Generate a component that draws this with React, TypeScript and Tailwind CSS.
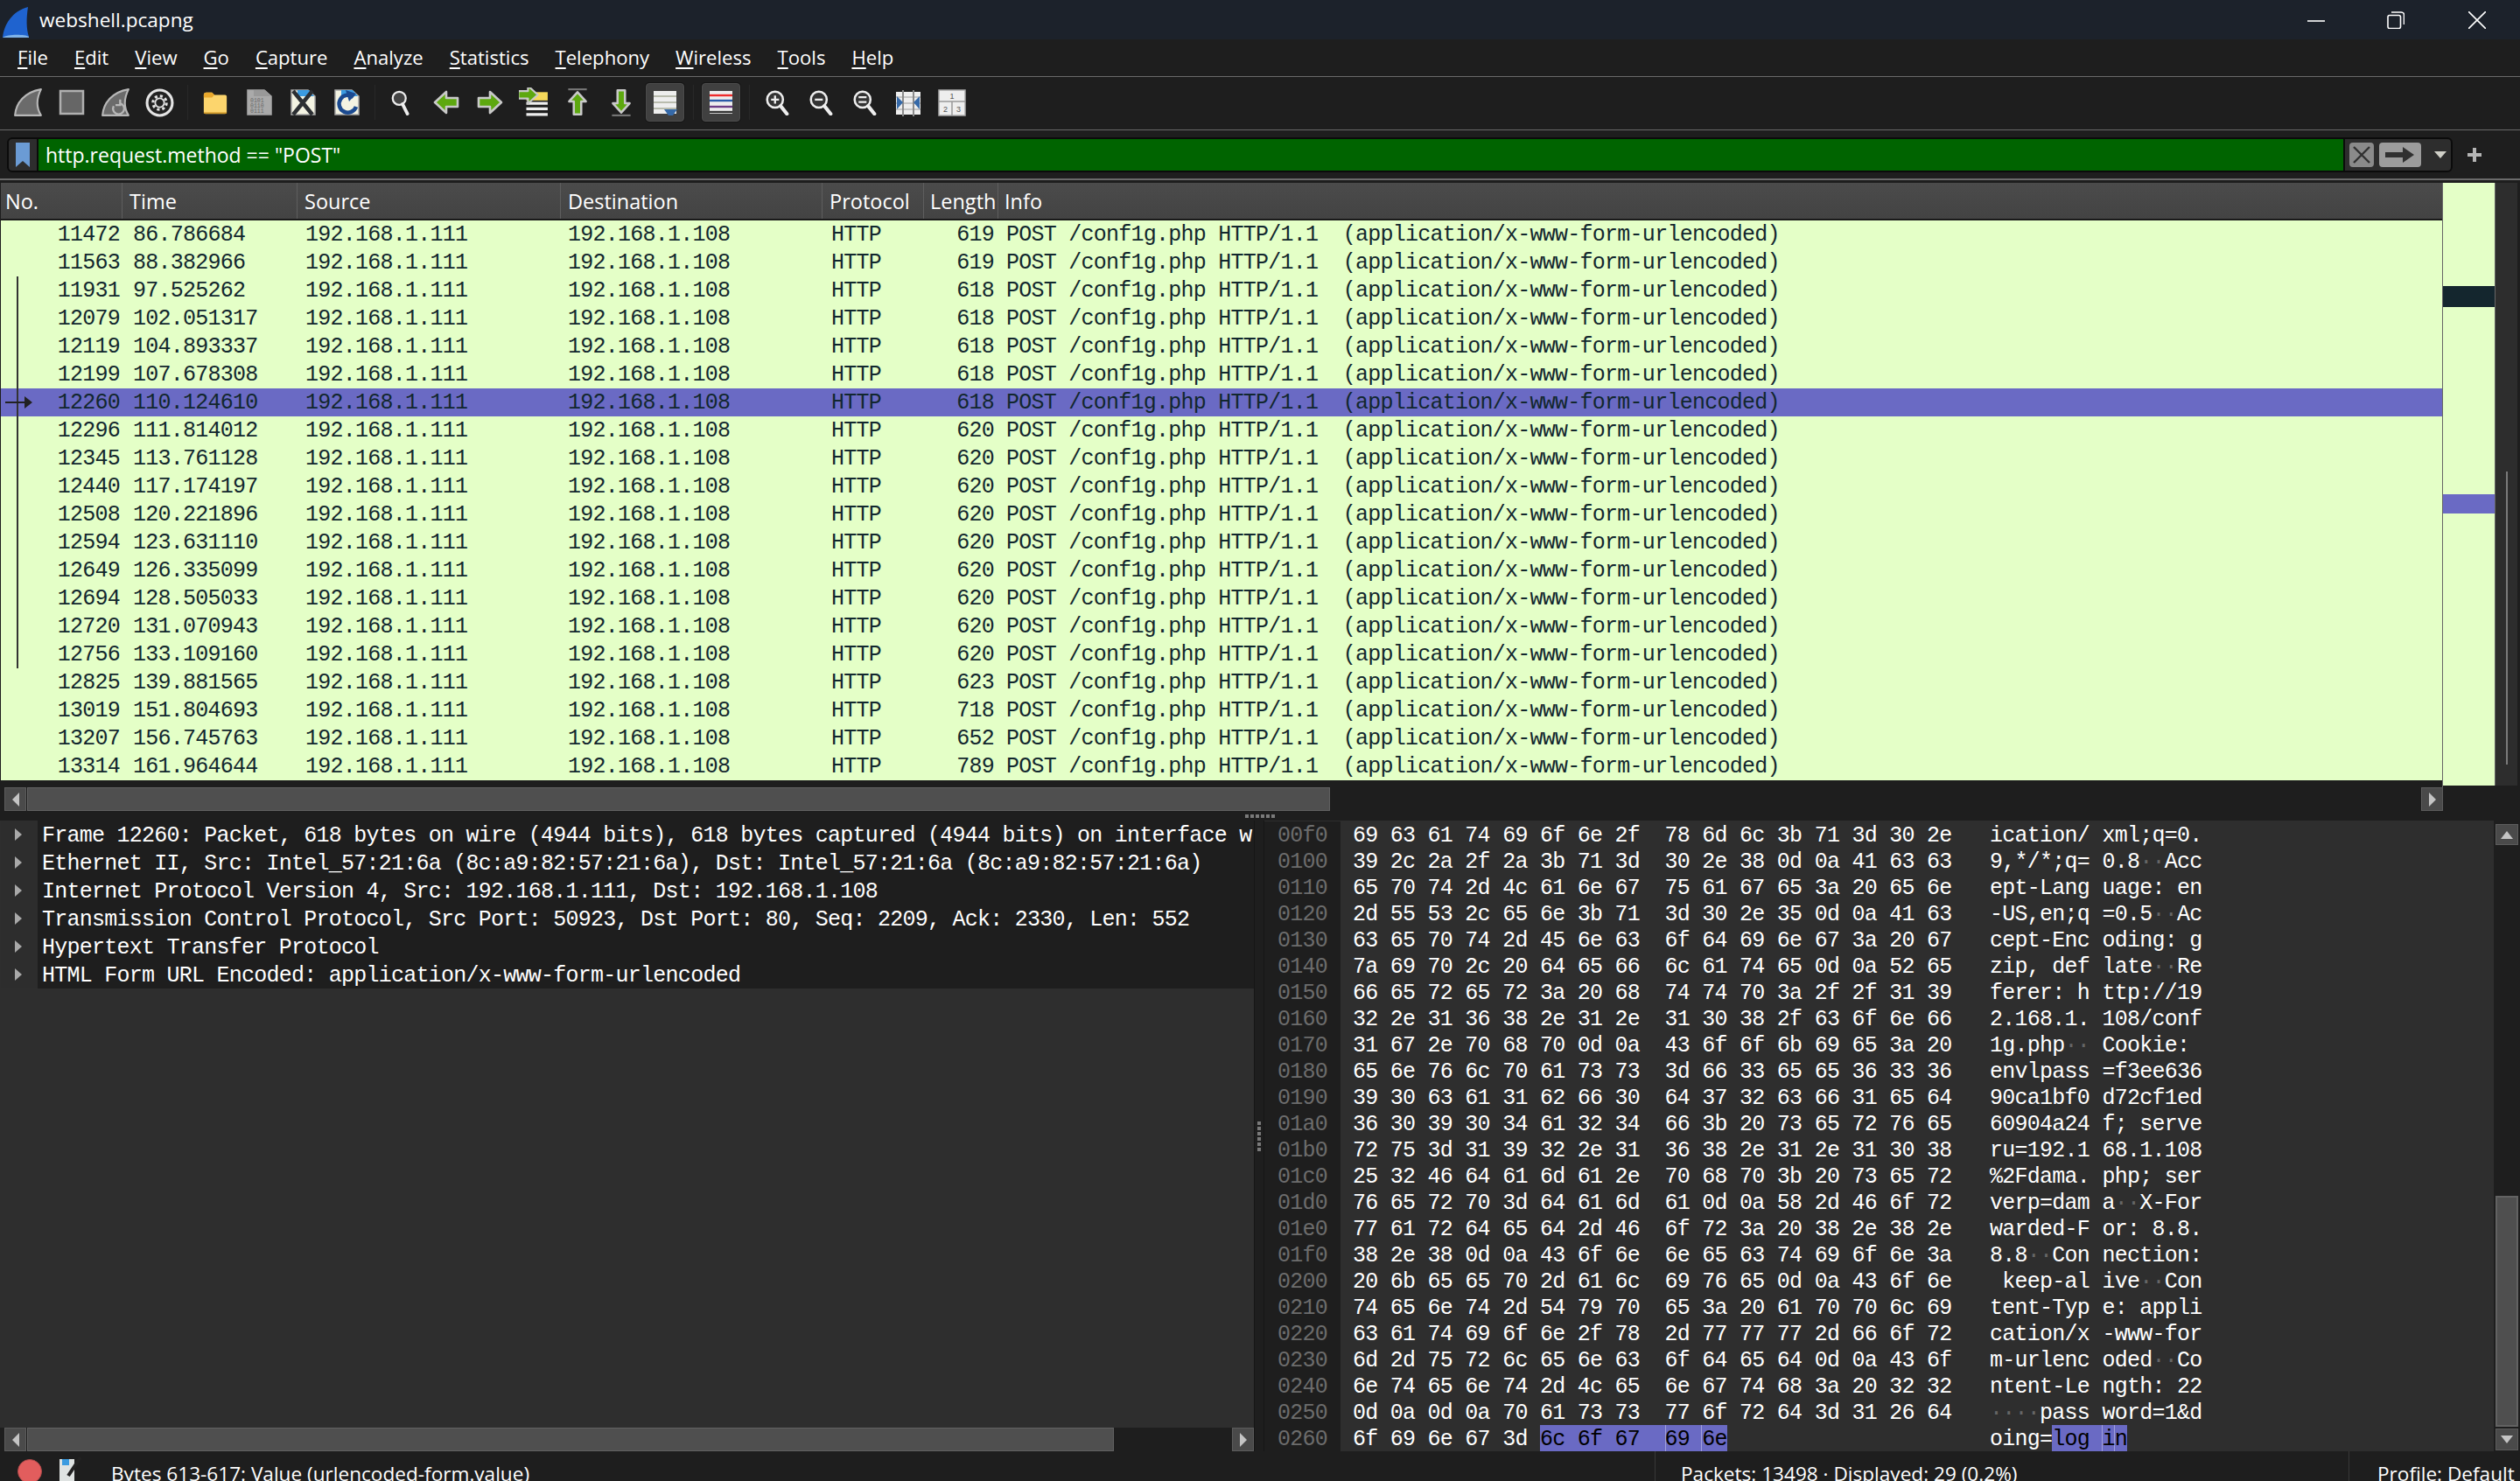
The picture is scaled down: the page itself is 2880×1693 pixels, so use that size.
import type { ReactNode } from "react";

const mono = "font-['Liberation_Mono',monospace] text-[25px] tracking-[-0.75px] whitespace-pre";

const PACKETS = [
  ["11472", "86.786684", "619"],
  ["11563", "88.382966", "619"],
  ["11931", "97.525262", "618"],
  ["12079", "102.051317", "618"],
  ["12119", "104.893337", "618"],
  ["12199", "107.678308", "618"],
  ["12260", "110.124610", "618"],
  ["12296", "111.814012", "620"],
  ["12345", "113.761128", "620"],
  ["12440", "117.174197", "620"],
  ["12508", "120.221896", "620"],
  ["12594", "123.631110", "620"],
  ["12649", "126.335099", "620"],
  ["12694", "128.505033", "620"],
  ["12720", "131.070943", "620"],
  ["12756", "133.109160", "620"],
  ["12825", "139.881565", "623"],
  ["13019", "151.804693", "718"],
  ["13207", "156.745763", "652"],
  ["13314", "161.964644", "789"],
];

const TREE = [
  "Frame 12260: Packet, 618 bytes on wire (4944 bits), 618 bytes captured (4944 bits) on interface w",
  "Ethernet II, Src: Intel_57:21:6a (8c:a9:82:57:21:6a), Dst: Intel_57:21:6a (8c:a9:82:57:21:6a)",
  "Internet Protocol Version 4, Src: 192.168.1.111, Dst: 192.168.1.108",
  "Transmission Control Protocol, Src Port: 50923, Dst Port: 80, Seq: 2209, Ack: 2330, Len: 552",
  "Hypertext Transfer Protocol",
  "HTML Form URL Encoded: application/x-www-form-urlencoded",
];

const HEX = [
  "69 63 61 74 69 6f 6e 2f 78 6d 6c 3b 71 3d 30 2e",
  "39 2c 2a 2f 2a 3b 71 3d 30 2e 38 0d 0a 41 63 63",
  "65 70 74 2d 4c 61 6e 67 75 61 67 65 3a 20 65 6e",
  "2d 55 53 2c 65 6e 3b 71 3d 30 2e 35 0d 0a 41 63",
  "63 65 70 74 2d 45 6e 63 6f 64 69 6e 67 3a 20 67",
  "7a 69 70 2c 20 64 65 66 6c 61 74 65 0d 0a 52 65",
  "66 65 72 65 72 3a 20 68 74 74 70 3a 2f 2f 31 39",
  "32 2e 31 36 38 2e 31 2e 31 30 38 2f 63 6f 6e 66",
  "31 67 2e 70 68 70 0d 0a 43 6f 6f 6b 69 65 3a 20",
  "65 6e 76 6c 70 61 73 73 3d 66 33 65 65 36 33 36",
  "39 30 63 61 31 62 66 30 64 37 32 63 66 31 65 64",
  "36 30 39 30 34 61 32 34 66 3b 20 73 65 72 76 65",
  "72 75 3d 31 39 32 2e 31 36 38 2e 31 2e 31 30 38",
  "25 32 46 64 61 6d 61 2e 70 68 70 3b 20 73 65 72",
  "76 65 72 70 3d 64 61 6d 61 0d 0a 58 2d 46 6f 72",
  "77 61 72 64 65 64 2d 46 6f 72 3a 20 38 2e 38 2e",
  "38 2e 38 0d 0a 43 6f 6e 6e 65 63 74 69 6f 6e 3a",
  "20 6b 65 65 70 2d 61 6c 69 76 65 0d 0a 43 6f 6e",
  "74 65 6e 74 2d 54 79 70 65 3a 20 61 70 70 6c 69",
  "63 61 74 69 6f 6e 2f 78 2d 77 77 77 2d 66 6f 72",
  "6d 2d 75 72 6c 65 6e 63 6f 64 65 64 0d 0a 43 6f",
  "6e 74 65 6e 74 2d 4c 65 6e 67 74 68 3a 20 32 32",
  "0d 0a 0d 0a 70 61 73 73 77 6f 72 64 3d 31 26 64",
  "6f 69 6e 67 3d 6c 6f 67 69 6e",
];

const MENU = ["File", "Edit", "View", "Go", "Capture", "Analyze", "Statistics", "Telephony", "Wireless", "Tools", "Help"];

function Svg({ children, size = 34 }: { children: ReactNode; size?: number }) {
  return (
    <svg width={size} height={size} viewBox="0 0 32 32" fill="none">
      {children}
    </svg>
  );
}

function Fin({ reload }: { reload?: boolean }) {
  return (
    <Svg>
      <path d="M2 30C3 17 12 5 30 2C25 12 25 22 30 30Z" fill="#6b6b6b" stroke="#b8b8b8" strokeWidth="2" strokeLinejoin="round" />
      {reload && <path d="M21 17a6 6 0 1 1-7 3M21 13v6h-5" stroke="#b8b8b8" strokeWidth="2.2" />}
    </Svg>
  );
}

function FileIcon({ children, fill = "#f3f3e2" }: { children?: ReactNode; fill?: string }) {
  return (
    <Svg size={32}>
      <path d="M3 2H22L30 9V30H3Z" fill={fill} stroke="#a8a8a8" strokeWidth="1.5" />
      <path d="M10 2H23L29 9H10Z" fill={fill === "#aaa" ? "#999" : "#3b9be0"} />
      {children}
    </Svg>
  );
}

function Magnifier({ children }: { children?: ReactNode }) {
  return (
    <Svg size={29}>
      <circle cx="13" cy="12" r="10" fill="#333" stroke="#eee" strokeWidth="2.8" />
      <path d="M20 20L28 30" stroke="#eee" strokeWidth="4.5" strokeLinecap="round" />
      {children}
    </Svg>
  );
}

function Arrow({ dir }: { dir: "left" | "right" | "up" | "down" }) {
  const rotate = { right: 0, left: 180, up: -90, down: 90 }[dir];
  return (
    <g transform={`rotate(${rotate} 16 16)`}>
      <path d="M3 11H16V4L29 16L16 28V21H3Z" fill="#5da80f" stroke="#c9c9c9" strokeWidth="2.6" strokeLinejoin="round" />
    </g>
  );
}

function Separator() {
  return (
    <div className="w-[14px] h-[40px] flex justify-center">
      <div className="w-px h-full bg-[#282828]" />
    </div>
  );
}

function ToolButton({ children, active }: { children: ReactNode; active?: boolean }) {
  return (
    <div className="w-[50px] h-[44px] flex items-center justify-center">
      {active ? (
        <div className="w-[44px] h-[44px] rounded-[4px] bg-[#404040] border border-[#4c4c4c] shadow-[0_0_0_1px_#161616] flex items-center justify-center">
          {children}
        </div>
      ) : (
        children
      )}
    </div>
  );
}

function Toolbar() {
  return (
    <div className="h-[61px] shrink-0 pl-[7px] pb-[2px] flex items-center border-b border-[#6a6a6a]">
      <ToolButton><Fin /></ToolButton>
      <ToolButton>
        <Svg size={32}><rect x="3" y="3" width="26" height="26" fill="#666" stroke="#b0b0b0" strokeWidth="2.5" /></Svg>
      </ToolButton>
      <ToolButton><Fin reload /></ToolButton>
      <ToolButton>
        <Svg size={33}>
          <circle cx="16" cy="16" r="14" fill="#222" stroke="#e4e4e4" strokeWidth="3" />
          <circle cx="16" cy="16" r="7.5" stroke="#e4e4e4" strokeWidth="3" strokeDasharray="3 2.9" />
          <circle cx="16" cy="16" r="5" stroke="#e4e4e4" strokeWidth="1.8" />
        </Svg>
      </ToolButton>
      <Separator />
      <ToolButton>
        <Svg size={30}>
          <path d="M2 7C2 5 3 4 5 4H12L15 7H28C29 7 30 8 30 9V28C30 29 29 30 28 30H4C3 30 2 29 2 28Z" fill="#fcd56d" />
          <path d="M2 10V7C2 5 3 4 5 4H12L15 7L12 10Z" fill="#e9a82c" />
          <path d="M2 29H30" stroke="#c98f1e" strokeWidth="1.5" />
        </Svg>
      </ToolButton>
      <ToolButton>
        <FileIcon fill="#aaa">
          <text x="6" y="16" fontSize="6.5" fontFamily="Liberation Mono" fill="#666">0101</text>
          <text x="6" y="22" fontSize="6.5" fontFamily="Liberation Mono" fill="#666">0110</text>
          <text x="6" y="28" fontSize="6.5" fontFamily="Liberation Mono" fill="#666">0111</text>
        </FileIcon>
      </ToolButton>
      <ToolButton>
        <FileIcon>
          <path d="M5 3L27 30M27 3L5 30" stroke="#2c2f33" strokeWidth="4.5" />
        </FileIcon>
      </ToolButton>
      <ToolButton>
        <FileIcon>
          <path d="M24 10A10 10 0 1 0 27 21" stroke="#1b4a90" strokeWidth="4.5" />
          <path d="M15 2L27 6L19 15Z" fill="#1b4a90" />
        </FileIcon>
      </ToolButton>
      <Separator />
      <ToolButton>
        <Svg size={30}>
          <circle cx="12" cy="11" r="8" fill="#444" stroke="#eee" strokeWidth="2.4" />
          <path d="M16 18L22 30" stroke="#eee" strokeWidth="4" strokeLinecap="round" />
        </Svg>
      </ToolButton>
      <ToolButton><Svg size={32}><Arrow dir="left" /></Svg></ToolButton>
      <ToolButton><Svg size={32}><Arrow dir="right" /></Svg></ToolButton>
      <ToolButton>
        <Svg>
          <path d="M8 5H31V14H8Z" fill="#f5d95a" />
          <path d="M8 17H31M8 23H31M8 29H31" stroke="#eee" strokeWidth="3" />
          <g transform="translate(-3 -5) scale(0.8)"><Arrow dir="right" /></g>
        </Svg>
      </ToolButton>
      <ToolButton>
        <Svg>
          <path d="M6 2H26" stroke="#777" strokeWidth="2" />
          <path d="M16 5L25 15H20V29H12V15H7Z" fill="#5da80f" stroke="#c9c9c9" strokeWidth="2.4" strokeLinejoin="round" />
        </Svg>
      </ToolButton>
      <ToolButton>
        <Svg>
          <path d="M6 30H26" stroke="#777" strokeWidth="2" />
          <path d="M16 27L25 17H20V3H12V17H7Z" fill="#5da80f" stroke="#c9c9c9" strokeWidth="2.4" strokeLinejoin="round" />
        </Svg>
      </ToolButton>
      <ToolButton active>
        <Svg size={32}>
          <rect x="3" y="3" width="26" height="26" fill="#eee" />
          <path d="M3 9H29M3 16H29M3 23H29" stroke="#b9bcae" strokeWidth="2" />
          <path d="M15 24H30L25 31H20Z" fill="#3569a8" />
        </Svg>
      </ToolButton>
      <Separator />
      <ToolButton active>
        <Svg size={32}>
          <rect x="3" y="3" width="26" height="26" fill="#eee" />
          <path d="M3 8H29" stroke="#ee2b2b" strokeWidth="2.4" />
          <path d="M3 14H29" stroke="#2a5aa8" strokeWidth="2.4" />
          <path d="M3 21H29" stroke="#6c3d86" strokeWidth="2.4" />
          <path d="M3 27H29" stroke="#333" strokeWidth="2.4" />
        </Svg>
      </ToolButton>
      <Separator />
      <ToolButton><Magnifier><path d="M8 12H18M13 7V17" stroke="#eee" strokeWidth="2.6" /></Magnifier></ToolButton>
      <ToolButton><Magnifier><path d="M8 12H18" stroke="#eee" strokeWidth="2.6" /></Magnifier></ToolButton>
      <ToolButton><Magnifier><path d="M8 9H18M8 15H18" stroke="#eee" strokeWidth="2.6" /></Magnifier></ToolButton>
      <ToolButton>
        <Svg size={32}>
          <rect x="2" y="4" width="28" height="26" fill="#eee" />
          <path d="M2 10H30M2 17H30M2 24H30" stroke="#c5c5c5" strokeWidth="2" />
          <path d="M10 2V32M22 2V32" stroke="#8a8a8a" strokeWidth="2" />
          <path d="M3 9L10 16L3 24ZM29 9L22 16L29 24Z" fill="#3569a8" />
        </Svg>
      </ToolButton>
      <ToolButton>
        <Svg size={32}>
          <rect x="1" y="2" width="30" height="29" fill="#eee" stroke="#aaa" strokeWidth="1.5" />
          <path d="M1 15H31M16 15V31" stroke="#999" strokeWidth="1.5" />
          <text x="16" y="12" textAnchor="middle" fontSize="9" fontFamily="Liberation Sans" fill="#555">1</text>
          <text x="8.5" y="27" textAnchor="middle" fontSize="9" fontFamily="Liberation Sans" fill="#555">2</text>
          <text x="23.5" y="27" textAnchor="middle" fontSize="9" fontFamily="Liberation Sans" fill="#555">3</text>
        </Svg>
      </ToolButton>
    </div>
  );
}

function TitleBar() {
  return (
    <div className="h-[45px] shrink-0 bg-[#1c222b] flex items-center">
      <svg width="33" height="40" viewBox="0 0 33 40" className="ml-[2px] mt-[4px]">
        <path d="M1 38C3 22 12 8 30 3C28 16 28 28 31 37Z" fill="#1f63cf" />
        <path d="M1 38C6 34 26 34 31 37L31 38Z" fill="#7fb4ea" />
      </svg>
      <span className="ml-[10px] text-[22.6px] text-white">webshell.pcapng</span>
      <div className="ml-auto flex items-center">
        <svg width="20" height="20" viewBox="0 0 20 20" stroke="#fff" strokeWidth="1.6" fill="none" className="mr-[71px]">
          <path d="M0 11H20" />
        </svg>
        <svg width="20" height="20" viewBox="0 0 20 20" stroke="#fff" strokeWidth="1.6" fill="none" className="mr-[73px]">
          <rect x="1" y="4.5" width="14.5" height="15" rx="2" />
          <path d="M5 1H16C18 1 19.5 2.5 19.5 4V15" />
        </svg>
        <svg width="20" height="20" viewBox="0 0 20 20" stroke="#fff" strokeWidth="1.6" fill="none" className="mr-[39px]">
          <path d="M0 0L20 20M20 0L0 20" />
        </svg>
      </div>
    </div>
  );
}

function MenuBar() {
  return (
    <div className="h-[43px] shrink-0 pl-[5px] flex items-center border-b border-[#6a6a6a]">
      {MENU.map((item) => (
        <span key={item} className="px-[15px] text-[22.1px] text-white">
          <span className="underline underline-offset-[3px]">{item[0]}</span>
          {item.slice(1)}
        </span>
      ))}
    </div>
  );
}

function FilterBar() {
  return (
    <div className="h-[57px] shrink-0 flex items-center border-b-2 border-[#6a6a6a] pt-[1px] pl-[8px]">
      <div className="w-[2795px] h-[40px] rounded-[6px] border-2 border-[#0b0b0b] bg-[#2d2d2d] flex overflow-hidden">
        <div className="w-[34px] flex items-center justify-center border-r-2 border-[#0b0b0b]">
          <svg width="16" height="28" viewBox="0 0 16 28">
            <path d="M0 0H16V28L8 21L0 28Z" fill="#6b9bd4" />
          </svg>
        </div>
        <div className="w-[2634px] bg-[#006400] pl-[8px] flex items-center text-[23px] text-white">
          http.request.method == "POST"
        </div>
        <div className="flex items-center border-l-2 border-[#0b0b0b] pl-[5px]">
          <div className="w-[28px] h-[28px] rounded-[4px] bg-[#8a8a8a] flex items-center justify-center">
            <svg width="20" height="20" viewBox="0 0 20 20" stroke="#303030" strokeWidth="2.4"><path d="M1 1L19 19M19 1L1 19" /></svg>
          </div>
          <div className="ml-[6px] w-[48px] h-[28px] rounded-[4px] bg-[#9c9c9c] flex items-center justify-center">
            <svg width="34" height="18" viewBox="0 0 34 18" fill="#303030"><path d="M0 6H20V0L33 9L20 18V12H0Z" /></svg>
          </div>
          <div className="ml-[15px] w-0 h-0 border-x-[7px] border-x-transparent border-t-[8px] border-t-[#d0d0c8]" />
        </div>
      </div>
      <svg width="18" height="18" viewBox="0 0 18 18" fill="#b5b5b5" className="ml-[16px]">
        <path d="M7 1H11V7H17V11H11V17H7V11H1V7H7Z" />
      </svg>
    </div>
  );
}

function HeaderCell({ className, children }: { className: string; children?: ReactNode }) {
  return <div className={`h-full flex items-center pt-[3px] border-r border-[#5e5e5e] text-[23.5px] text-white ${className}`}>{children}</div>;
}

function PacketRow({ row, index }: { row: string[]; index: number }) {
  const selected = index === 6;
  const inConversation = index >= 2 && index <= 15;
  return (
    <div className={`h-[32px] flex items-center text-[#12272e] ${mono} ${selected ? "bg-[#6a6ac4]" : ""}`}>
      <div className="w-[140px] h-full relative flex items-center justify-end pr-[4px] pt-[2px]">
        {inConversation && <div className="absolute left-[18px] top-0 bottom-0 w-[2px] bg-[#333]" />}
        {selected && (
          <svg width="32" height="14" viewBox="0 0 32 14" fill="#222" className="absolute left-[5px] top-[9px]">
            <path d="M0 6H22V0L31 7L22 14V8H0Z" />
          </svg>
        )}
        {row[0]}
      </div>
      <div className="w-[200px] pl-[11px] pt-[2px]">{row[1]}</div>
      <div className="w-[301px] pl-[8px] pt-[2px]">192.168.1.111</div>
      <div className="w-[299px] pl-[7px] pt-[2px]">192.168.1.108</div>
      <div className="w-[116px] pl-[9px] pt-[2px]">HTTP</div>
      <div className="w-[82px] pr-[3px] pt-[2px] text-right">{row[2]}</div>
      <div className="pl-[11px] pt-[2px]">POST /conf1g.php HTTP/1.1  (application/x-www-form-urlencoded)</div>
    </div>
  );
}

function PacketPane() {
  return (
    <div className="h-[691px] shrink-0 mt-[3px] flex">
      <div className="w-[2792px] pl-px border-r border-[#666]">
        <div className="h-[43px] flex border-b-2 border-[#1a1a1a] bg-gradient-to-b from-[#4b4b4b] to-[#434343]">
          <HeaderCell className="w-[139px] pl-[5px]">No.</HeaderCell>
          <HeaderCell className="w-[200px] pl-[8px]">Time</HeaderCell>
          <HeaderCell className="w-[301px] pl-[8px]">Source</HeaderCell>
          <HeaderCell className="w-[299px] pl-[8px]">Destination</HeaderCell>
          <HeaderCell className="w-[116px] pl-[8px]">Protocol</HeaderCell>
          <HeaderCell className="w-[85px] pl-[7px]">Length</HeaderCell>
          <div className="flex-1 h-full flex items-center pl-[7px] pt-[3px] text-[23.5px] text-white">Info</div>
        </div>
        <div className="h-[640px] bg-[#e4ffc7]">
          {PACKETS.map((row, i) => (
            <PacketRow key={row[0]} row={row} index={i} />
          ))}
        </div>
      </div>
      <div className="w-[60px] h-[689px] bg-[#e4ffc7] border-r border-[#666] flex flex-col">
        <div className="h-[118px] shrink-0" />
        <div className="h-[24px] shrink-0 bg-[#14262e]" />
        <div className="h-[214px] shrink-0" />
        <div className="h-[22px] shrink-0 bg-[#6a6ac4]" />
      </div>
      <div className="w-[25px] h-[689px] bg-[#2d2d2d] relative">
        <div className="absolute left-[12px] top-[330px] w-[2px] h-[335px] bg-[#7a7a7a]" />
      </div>
    </div>
  );
}

function ScrollButton({ dir }: { dir: "left" | "right" }) {
  return (
    <div className="w-[25px] h-full shrink-0 bg-[#4a4a4a] border border-[#5c5c5c] flex items-center justify-center">
      <div
        className={
          dir === "left"
            ? "w-0 h-0 border-y-[8px] border-y-transparent border-r-[8px] border-r-[#c4c4c4]"
            : "w-0 h-0 border-y-[8px] border-y-transparent border-l-[8px] border-l-[#c4c4c4]"
        }
      />
    </div>
  );
}

function HScroll({ thumb, width }: { thumb: string; width: string }) {
  return (
    <div className={`h-[27px] shrink-0 flex pl-[5px] ${width}`}>
      <ScrollButton dir="left" />
      <div className={`h-full ml-px bg-[#4f4f4f] border border-[#626262] ${thumb}`} />
      <div className="flex-1" />
      <ScrollButton dir="right" />
    </div>
  );
}

function HexRow({ hex, index }: { hex: string; index: number }) {
  const bytes = hex.split(" ");
  const isLast = index === HEX.length - 1;
  const offset = (0xf0 + index * 16).toString(16).padStart(4, "0");
  const cell = "inline-block h-[30px]";
  return (
    <div className={`h-[30px] leading-[34px] flex ${mono}`}>
      <div className="w-[87px] pl-[15px] bg-[#1e1e1e] text-[#6c6c6c]">{offset}</div>
      <div className="w-[728px] pl-[14px] text-white">
        {bytes.map((b, i) => {
          const selected = isLast && i >= 5;
          const boxed = isLast && i === 8;
          const gap = i === bytes.length - 1 ? "" : i === 7 ? "  " : " ";
          return (
            <span
              key={i}
              className={`${cell} ${selected ? "bg-[#6a6ac4] text-black" : ""} ${boxed ? "shadow-[inset_1px_0_#a0a0dc,inset_-1px_0_#a0a0dc]" : ""}`}
            >
              {b}
              {gap}
            </span>
          );
        })}
      </div>
      <div className="pl-[14px] text-white">
        {bytes.map((b, i) => {
          const code = parseInt(b, 16);
          const printable = code >= 32 && code < 127;
          const selected = isLast && i >= 5;
          const boxed = isLast && i === 8;
          return (
            <span
              key={i}
              className={`${cell} ${selected ? "bg-[#6a6ac4] text-black" : ""} ${printable ? "" : "text-[#666]"} ${boxed ? "shadow-[inset_1px_0_#a0a0dc,inset_-1px_0_#a0a0dc]" : ""}`}
            >
              {printable ? String.fromCharCode(code) : "·"}
              {i === 7 ? " " : ""}
            </span>
          );
        })}
      </div>
    </div>
  );
}

function GripDots({ vertical }: { vertical?: boolean }) {
  return (
    <div className={vertical ? "flex flex-col gap-[2px]" : "flex gap-[2px]"}>
      {[0, 1, 2, 3, 4, 5].map((i) => (
        <div key={i} className="w-[4px] h-[4px] bg-[#7a7a7a]" />
      ))}
    </div>
  );
}

function BottomPanes() {
  return (
    <div className="h-[721px] shrink-0 flex">
      <div className="w-[1433px] shrink-0 flex flex-col">
        <div className="h-[694px] bg-[#2e2e2e] pl-[1px] overflow-hidden">
          {TREE.map((line) => (
            <div key={line} className="h-[32px] flex bg-[#1e1e1e] overflow-hidden">
              <div className="w-[42px] shrink-0 h-full bg-[#2d2d2d] flex items-center justify-center pr-[2px]">
                <div className="w-0 h-0 border-y-[7px] border-y-transparent border-l-[8px] border-l-[#a8a8a8]" />
              </div>
              <div className={`pl-[5px] pt-[3px] flex items-center text-white ${mono}`}>{line}</div>
            </div>
          ))}
        </div>
        <HScroll thumb="w-[1242px]" width="w-full" />
      </div>
      <div className="w-[12px] shrink-0 flex items-center justify-center border-x border-[#161616]">
        <GripDots vertical />
      </div>
      <div className="w-[1405px] shrink-0 bg-[#2e2e2e] pt-px">
        {HEX.map((hex, i) => (
          <HexRow key={i} hex={hex} index={i} />
        ))}
      </div>
      <div className="w-[26px] ml-[2px] shrink-0 flex flex-col">
        <div className="h-[24px] mt-[4px] bg-[#4a4a4a] border border-[#5c5c5c] flex items-center justify-center">
          <div className="w-0 h-0 border-x-[7px] border-x-transparent border-b-[9px] border-b-[#c4c4c4]" />
        </div>
        <div className="h-[264px] mt-[401px] bg-[#4f4f4f] border-2 border-[#626262]" />
        <div className="h-[25px] mt-[2px] bg-[#4a4a4a] border border-[#5c5c5c] flex items-center justify-center">
          <div className="w-0 h-0 border-x-[7px] border-x-transparent border-t-[9px] border-t-[#c4c4c4]" />
        </div>
      </div>
    </div>
  );
}

function StatusBar() {
  return (
    <div className="h-[34px] shrink-0 flex text-[22.6px] text-white overflow-hidden">
      <div className="w-[1891px] flex items-start pt-[11px]">
        <div className="ml-[20px] mt-[-2px] w-[28px] h-[28px] rounded-full bg-[#e25d5d] border border-[#b04a4a]" />
        <svg width="27" height="34" viewBox="0 0 27 34" className="ml-[19px] mt-[-5px]">
          <path d="M1 3H18V34H1Z" fill="#dfe3e2" />
          <path d="M4 3H12V10H4Z" fill="#3b9be0" />
          <path d="M25 1L11 22" stroke="#222" strokeWidth="4" />
        </svg>
        <span className="ml-[33px] leading-[30px]">Bytes 613-617: Value (urlencoded-form.value)</span>
      </div>
      <div className="w-[793px] border-l border-[#383838] pl-[29px] pt-[11px] leading-[30px]">
        Packets: 13498 · Displayed: 29 (0.2%)
      </div>
      <div className="border-l border-[#383838] pl-[32px] pt-[11px] leading-[30px] whitespace-nowrap">Profile: Default</div>
    </div>
  );
}

export default function App() {
  return (
    <div className="w-[2880px] h-[1693px] overflow-hidden flex flex-col bg-[#1e1e1e] font-['Open_Sans',sans-serif]">
      <TitleBar />
      <MenuBar />
      <Toolbar />
      <FilterBar />
      <PacketPane />
      <HScroll thumb="w-[1489px]" width="w-[2792px]" />
      <div className="h-[11px] shrink-0 flex items-center justify-center">
        <GripDots />
      </div>
      <BottomPanes />
      <StatusBar />
    </div>
  );
}
